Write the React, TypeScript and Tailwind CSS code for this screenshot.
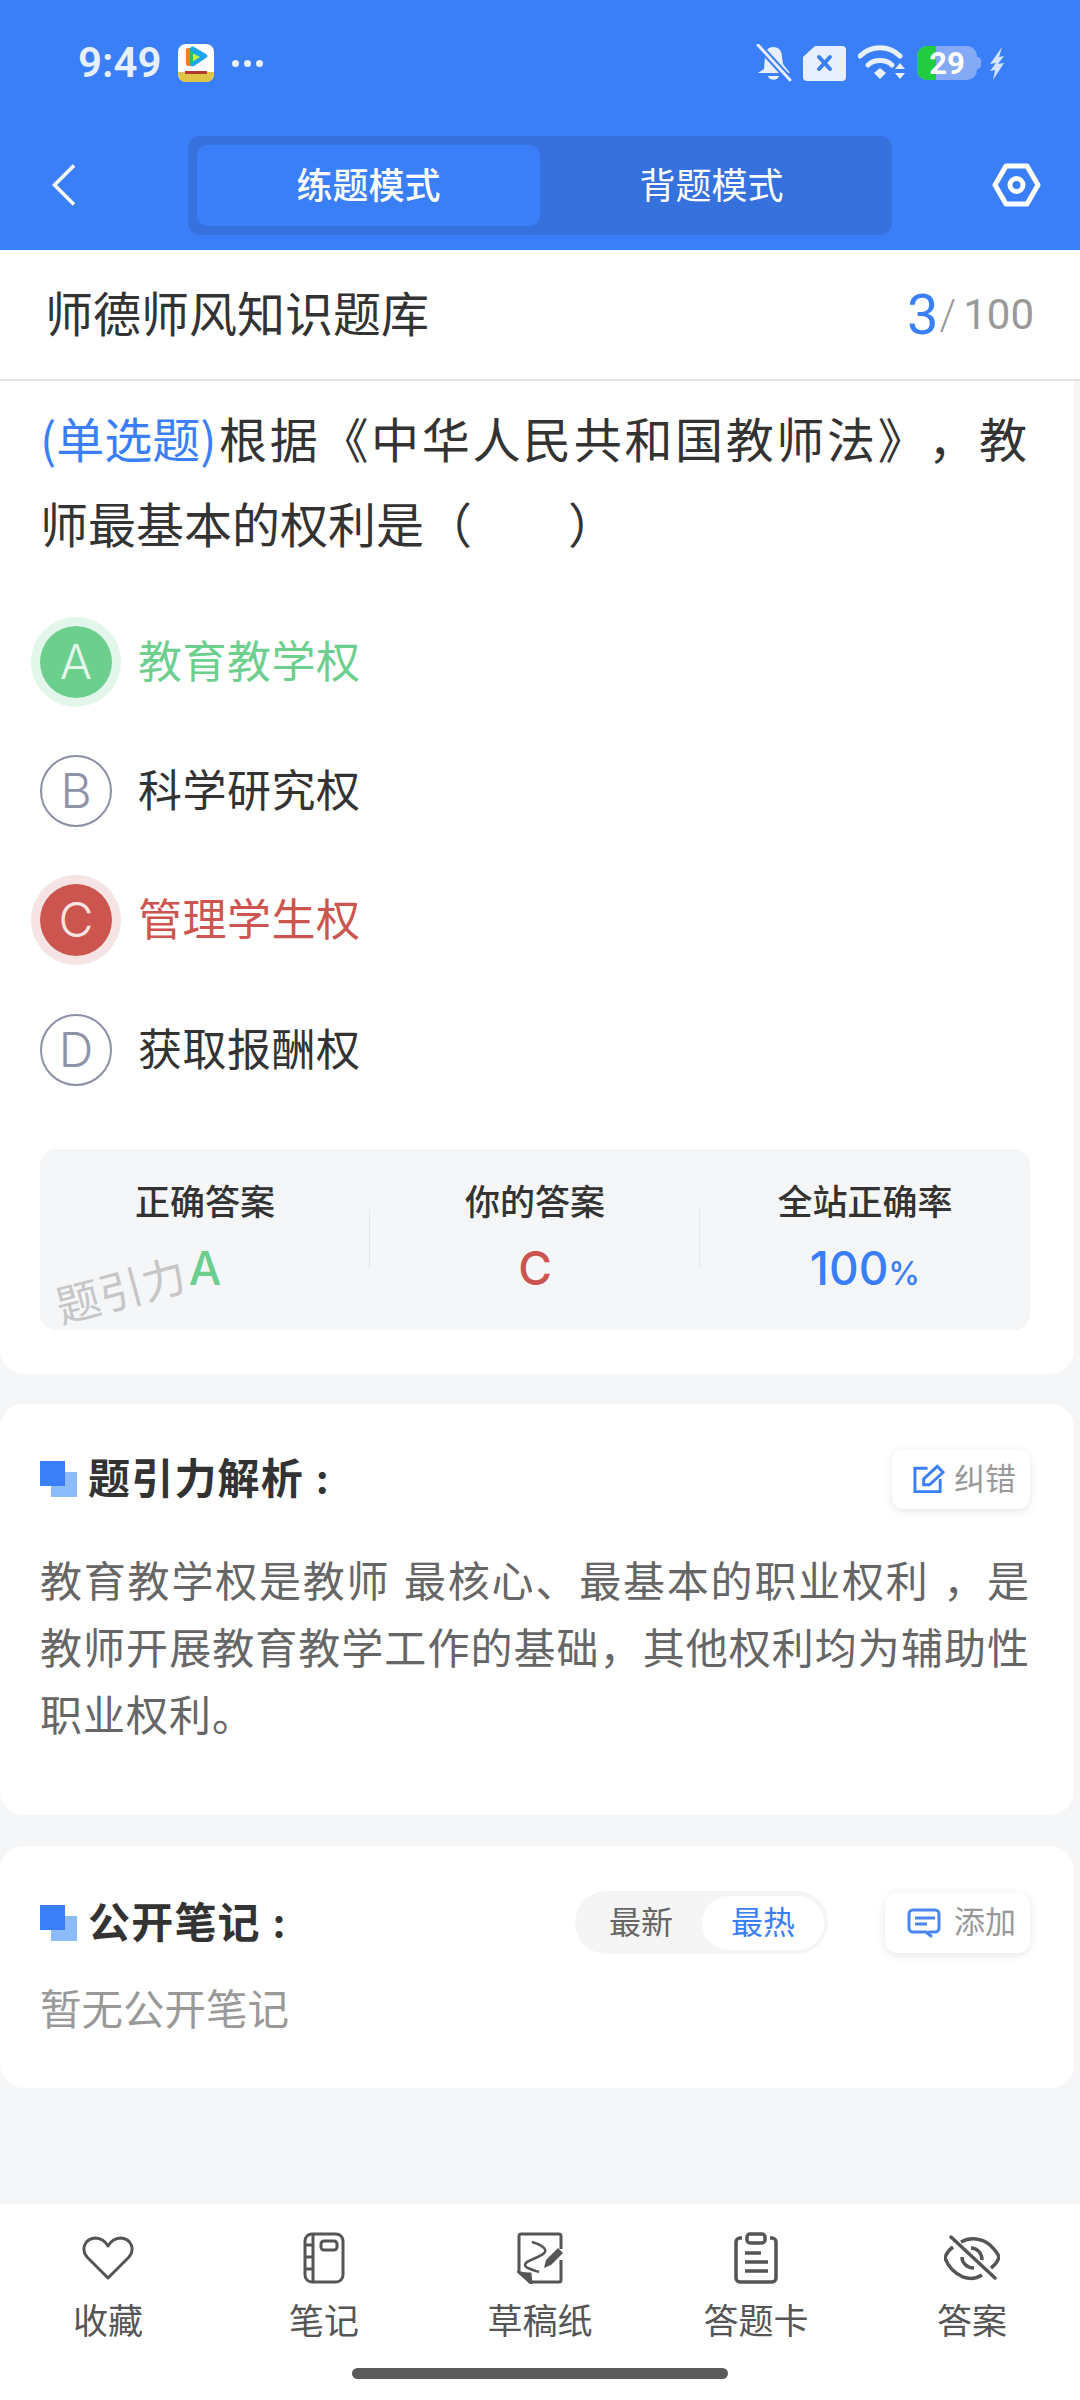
import React from 'react'

const cn = 'font-["Inter","Noto_Sans_CJK_SC",sans-serif]'

function StatusBar() {
    return (
        <div className="flex h-[126px] items-center pl-[78px] pr-[75px] text-[#e8effe]">
            <span className="w-[100px] font-['Roboto'] text-[42px] font-semibold leading-none">9:49</span>
            <svg width="36" height="38" viewBox="0 0 36 38">
                <rect width="36" height="38" rx="8" fill="#fff" />
                <path d="M0 28h36v2a8 8 0 0 1-8 8H8a8 8 0 0 1-8-8z" fill="#e0c445" />
                <path d="M8 6a2 2 0 0 1 2-2h5v18h-5a2 2 0 0 1-2-2z" fill="#f07f1c" />
                <path d="M12 5c0-2 2-3 4-2l12 7c2 1 2 3 0 4l-12 8c-2 1-4 0-4-2z" fill="#1aa7ee" />
                <path d="M14 9l8 4-8 5z" fill="#c9f23f" />
                <path d="M15 8v10l-3 2V6z" fill="#1fc46a" />
                <rect x="7" y="27" width="22" height="3" fill="#b03a2e" />
            </svg>
            <div className="ml-[18px] flex gap-[5px]">
                <i className="h-[7px] w-[7px] rounded-full bg-[#e8effe]" />
                <i className="h-[7px] w-[7px] rounded-full bg-[#e8effe]" />
                <i className="h-[7px] w-[7px] rounded-full bg-[#e8effe]" />
            </div>
            <div className="ml-auto flex items-center">
                <svg width="36" height="38" viewBox="0 0 36 38" fill="#e8effe">
                    <path d="M17 3c6 0 9 4 9 10l1 7 7 9H2l6-4 1-12c0-6 3-10 8-10zM12 32h11c-1 5-10 5-11 0z" />
                    <path d="M2 1l32 35" stroke="#3b7ff8" strokeWidth="7" />
                    <path d="M2 1l32 35" stroke="#e8effe" strokeWidth="3" strokeLinecap="round" />
                </svg>
                <svg className="ml-[11px]" width="43" height="35" viewBox="0 0 43 35">
                    <path d="M12 0h27a4 4 0 0 1 4 4v27a4 4 0 0 1-4 4H4a4 4 0 0 1-4-4V11z" fill="#e8effe" />
                    <path d="M16 11l11 12M27 11L16 23" stroke="#3b7ff8" strokeWidth="4" strokeLinecap="round" />
                </svg>
                <svg className="ml-[12px]" width="47" height="36" viewBox="0 0 47 36" fill="none" stroke="#e8effe">
                    <path d="M2 11c11-11 29-11 40 0" strokeWidth="5" strokeLinecap="round" />
                    <path d="M10 20c6-6 18-6 24 0" strokeWidth="5" strokeLinecap="round" />
                    <path d="M16 28l6-5 6 5-6 6z" fill="#e8effe" stroke="none" />
                    <path d="M37 24l5-6 5 6zM37 28l5 6 5-6z" fill="#e8effe" stroke="none" />
                </svg>
                <div className="relative ml-[12px] h-[34px] w-[60px] overflow-hidden rounded-[10px] bg-[#84aaf6]">
                    <div className="h-full w-[19px] bg-[#22cc3f]" />
                    <span className="absolute inset-0 flex items-center justify-center font-['Roboto'] text-[31px] font-bold leading-none text-white">
                        29
                    </span>
                </div>
                <i className="h-[12px] w-[4px] rounded-r-sm bg-[#84aaf6]" />
                <svg className="ml-[8px]" width="16" height="33" viewBox="0 0 16 33" fill="#d5e3fd">
                    <path d="M13 0L1 17l6-1-6 8 5-1-2 10L15 16l-6 1 6-8-5 1z" />
                </svg>
            </div>
        </div>
    )
}

function Header() {
    return (
        <div className="flex h-[124px] items-start pl-[52px] pr-[39px] pt-[10px] text-white">
            <svg className="mt-[28px]" width="24" height="42" viewBox="0 0 24 42" fill="none" stroke="#fff" strokeWidth="3.5">
                <path d="M22 1.5L2.5 21 22 40.5" />
            </svg>
            <div className="ml-[112px] flex h-[99px] w-[704px] items-center rounded-[12px] bg-[#3671dd] px-[9px]">
                <div className="flex h-[81px] w-[343px] items-center justify-center rounded-[10px] bg-[#3b7ff8] text-[36px] font-medium">
                    练题模式
                </div>
                <div className="flex h-[81px] w-[343px] items-center justify-center text-[36px]">背题模式</div>
            </div>
            <svg className="ml-auto mt-[27px]" width="49" height="44" viewBox="0 0 49 44" fill="none" stroke="#fff" strokeWidth="5">
                <path d="M14 3h21l11 19-11 19H14L3 22z" strokeLinejoin="round" />
                <circle cx="24.5" cy="22" r="6.5" />
            </svg>
        </div>
    )
}

function Option({ letter, text, tone }: { letter: string; text: string; tone?: 'right' | 'wrong' }) {
    const circle =
        tone === 'right'
            ? 'bg-[#6dcf8e] text-[#e2f6ea] shadow-[0_0_0_9px_#e2f6ea]'
            : tone === 'wrong'
              ? 'bg-[#cc5550] text-[#f6e3e3] shadow-[0_0_0_9px_#f6e3e3]'
              : 'border-2 border-[#8c90a5] text-[#8f93a8]'
    const label = tone === 'right' ? 'text-[#6dcf8e]' : tone === 'wrong' ? 'text-[#cc5550]' : 'text-[#333]'
    return (
        <div className="flex h-[129.3px] items-center">
            <div className={`flex h-[72px] w-[72px] shrink-0 items-center justify-center rounded-full text-[48px] font-light leading-none ${circle}`}>
                {letter}
            </div>
            <span className={`ml-[26px] text-[44px] tracking-[0.5px] ${label}`}>{text}</span>
        </div>
    )
}

function Stat({ label, children, divider }: { label: string; children: React.ReactNode; divider?: boolean }) {
    return (
        <div className="relative flex flex-1 flex-col items-center pt-[33px]">
            <span className="text-[35px] font-medium leading-[40px] text-[#333]">{label}</span>
            <div className="mt-[24px] h-[44px] text-[46px] font-medium leading-[44px]">{children}</div>
            {divider && <i className="absolute right-0 top-[60px] h-[60px] w-px bg-[#e6e7ea]" />}
        </div>
    )
}

function SectionTitle({ text }: { text: string }) {
    return (
        <div className="flex items-center">
            <div className="relative h-[36px] w-[37px] shrink-0">
                <i className="absolute bottom-0 right-0 h-[25px] w-[26px] bg-[#8dbcfb]" />
                <i className="absolute left-0 top-0 h-[25px] w-[25px] bg-[#3b7ff8]" />
            </div>
            <span className="ml-[11px] whitespace-pre text-[42px] font-bold leading-none tracking-[1.2px] text-[#333]">{text}</span>
        </div>
    )
}

function TabItem({ label, children }: { label: string; children: React.ReactNode }) {
    return (
        <div className="flex w-[216px] flex-col items-center">
            <div className="flex h-[60px] items-center justify-center">{children}</div>
            <span className="mt-[11px] text-[35px] leading-[44px] text-[#555]">{label}</span>
        </div>
    )
}

export default function App() {
    return (
        <div className={`flex h-[2400px] w-[1080px] flex-col overflow-hidden bg-[#f5f6f8] ${cn}`}>
            <div className="bg-[#3b7ff8]">
                <StatusBar />
                <Header />
            </div>

            {/* Question card */}
            <div className="mr-[6px] h-[1124px] rounded-b-[24px] bg-white">
                <div className="-mr-[6px] flex h-[131px] items-center justify-between border-b-2 border-[#e3e3e3] bg-white pl-[45px] pr-[46px]">
                    <span className="text-[48px] leading-none text-[#333]">师德师风知识题库</span>
                    <span className="flex items-center font-['Roboto'] text-[42px] leading-none text-[#999]">
                        <span className="text-[56px] text-[#3b7ff8]">3</span>
                        <span className="ml-[1px] mr-[7px] font-light">/</span>100
                    </span>
                </div>
                <div className="pl-[40px] pr-[47px] pt-[14px]">
                    <p className="text-justify text-[48px] leading-[85px] text-[#333] [text-spacing-trim:space-all]">
                        <span className='inline-block font-["Noto_Sans_CJK_SC"] text-[#3b7ff8]'>(单选题)</span>根据《中华人民共和国教师法》，教师最基本的权利是（　　）
                    </p>
                    <div className="mt-[29px]">
                        <Option letter="A" text="教育教学权" tone="right" />
                        <Option letter="B" text="科学研究权" />
                        <Option letter="C" text="管理学生权" tone="wrong" />
                        <Option letter="D" text="获取报酬权" />
                    </div>
                    <div className="relative mr-[-3px] mt-[35px] flex h-[181px] rounded-[16px] bg-[#f5f6f8]">
                        <Stat label="正确答案" divider>
                            <span className="text-[#6dcf8e]">A</span>
                        </Stat>
                        <Stat label="你的答案" divider>
                            <span className="text-[#cc5550]">C</span>
                        </Stat>
                        <Stat label="全站正确率">
                            <span className="text-[#3b7ff8]">
                                100<span className="text-[32px]">%</span>
                            </span>
                        </Stat>
                        <span className="absolute left-[17px] top-[137px] origin-left -rotate-[15deg] text-[44px] leading-none text-[#c6c6c6]">
                            题引力
                        </span>
                    </div>
                </div>
            </div>

            {/* Analysis */}
            <div className="mr-[6px] mt-[30px] h-[411px] rounded-[24px] bg-white pl-[40px] pr-[44px] pt-[45px]">
                <div className="flex items-center justify-between">
                    <SectionTitle text="题引力解析 :" />
                    <div className="flex h-[60px] w-[138px] items-center gap-[8px] rounded-[12px] bg-white pl-[21px] text-[31px] text-[#999] shadow-[0_2px_10px_rgba(0,0,0,0.1)]">
                        <svg width="33" height="30" viewBox="0 0 34 30" fill="none" stroke="#3b7ff8" strokeWidth="3">
                            <path d="M15 4H2v24h26V15" />
                            <path d="M11 21v-6L25 2l6 6-14 13z" />
                        </svg>
                        纠错
                    </div>
                </div>
                <p className="mt-[39px] text-justify text-[42px] leading-[67px] tracking-[1px] text-[#666]">
                    教育教学权是教师 最核心、最基本的职业权利 ，是教师开展教育教学工作的基础，其他权利均为辅助性职业权利。
                </p>
            </div>

            {/* Public notes */}
            <div className="mr-[6px] mt-[31px] h-[242px] rounded-[24px] bg-white pl-[40px] pr-[44px] pt-[45px]">
                <div className="flex h-[63px] items-center">
                    <SectionTitle text="公开笔记 :" />
                    <div className="ml-auto flex h-[63px] w-[253px] items-center justify-between rounded-full bg-[#f5f5f5] pl-[34px] pr-[4px] text-[32px] text-[#666]">
                        最新
                        <span className="flex h-[54px] w-[122px] items-center justify-center rounded-full bg-white text-[#3b7ff8]">最热</span>
                    </div>
                    <div className="ml-[57px] flex h-[60px] w-[145px] items-center gap-[13px] rounded-[12px] bg-white pl-[22px] text-[31px] text-[#999] shadow-[0_2px_10px_rgba(0,0,0,0.1)]">
                        <svg width="34" height="30" viewBox="0 0 34 30" fill="none" stroke="#4a86ee" strokeWidth="3">
                            <path d="M22 24h6a4 4 0 0 0 4-4V6a4 4 0 0 0-4-4H6a4 4 0 0 0-4 4v14a4 4 0 0 0 4 4h13l5 4" strokeLinecap="round" />
                            <path d="M8 10h20M8 16h12" />
                        </svg>
                        添加
                    </div>
                </div>
                <p className="mt-[31px] text-[41.5px] leading-[50px] text-[#999]">暂无公开笔记</p>
            </div>

            {/* Bottom tab bar */}
            <div className="mt-auto h-[196px] bg-white pt-[24px]">
                <div className="flex">
                    <TabItem label="收藏">
                        <svg width="52" height="44" viewBox="0 0 52 44" fill="none" stroke="#555" strokeWidth="3">
                            <path d="M26 42L5 21C-1 14 2 3 13 2c6 0 10 3 13 8 3-5 7-8 13-8 11 1 14 12 8 19z" strokeLinejoin="round" />
                        </svg>
                    </TabItem>
                    <TabItem label="笔记">
                        <svg width="42" height="52" viewBox="0 0 42 52" fill="none" stroke="#555" strokeWidth="3">
                            <rect x="2" y="2" width="38" height="48" rx="7" />
                            <path d="M10 2v48M2 13h8M2 25h8M2 37h8" />
                            <rect x="18" y="9" width="16" height="9" rx="3" />
                        </svg>
                    </TabItem>
                    <TabItem label="草稿纸">
                        <svg width="46" height="52" viewBox="0 0 46 52" fill="none" stroke="#555" strokeWidth="3">
                            <path d="M44 17V4a2 2 0 0 0-2-2H4a2 2 0 0 0-2 2v36l11 10h29a2 2 0 0 0 2-2V28" strokeLinejoin="round" />
                            <path d="M3 41c5 1 9 1 10 1l1 9z" fill="#555" />
                            <path d="M15 10C22 12 30 16 28 20C26 25 8 28 8 33C8 36 16 38 22 40" strokeWidth="2.5" />
                            <path d="M27 36l2-8 12-12 5 5-12 12z" fill="#555" stroke="none" />
                        </svg>
                    </TabItem>
                    <TabItem label="答题卡">
                        <svg width="44" height="52" viewBox="0 0 44 52" fill="none" stroke="#555" strokeWidth="3.5">
                            <path d="M8 6H6a4 4 0 0 0-4 4v36a4 4 0 0 0 4 4h32a4 4 0 0 0 4-4V10a4 4 0 0 0-4-4h-2" />
                            <rect x="13" y="2" width="18" height="9" rx="3" />
                            <path d="M11 21h16M11 30h23M11 39h23" />
                        </svg>
                    </TabItem>
                    <TabItem label="答案">
                        <svg width="56" height="46" viewBox="0 0 56 46" fill="none" stroke="#555" strokeWidth="3.5">
                            <path d="M17 7C26 2 38 3 46 10c4 4 8 8 9 12-1 4-4 8-8 11" />
                            <path d="M9 12C5 15 2 19 1 23c3 8 9 15 18 19 6 2 13 2 19-2" />
                            <path d="M18 22c0 6 5 11 12 11M27 13c6 0 11 5 11 12" />
                            <path d="M7 2l44 41" strokeLinecap="round" />
                        </svg>
                    </TabItem>
                </div>
                <div className="mx-auto mt-[25px] h-[11px] w-[376px] rounded-full bg-[#5a5a5a]" />
            </div>
        </div>
    )
}
